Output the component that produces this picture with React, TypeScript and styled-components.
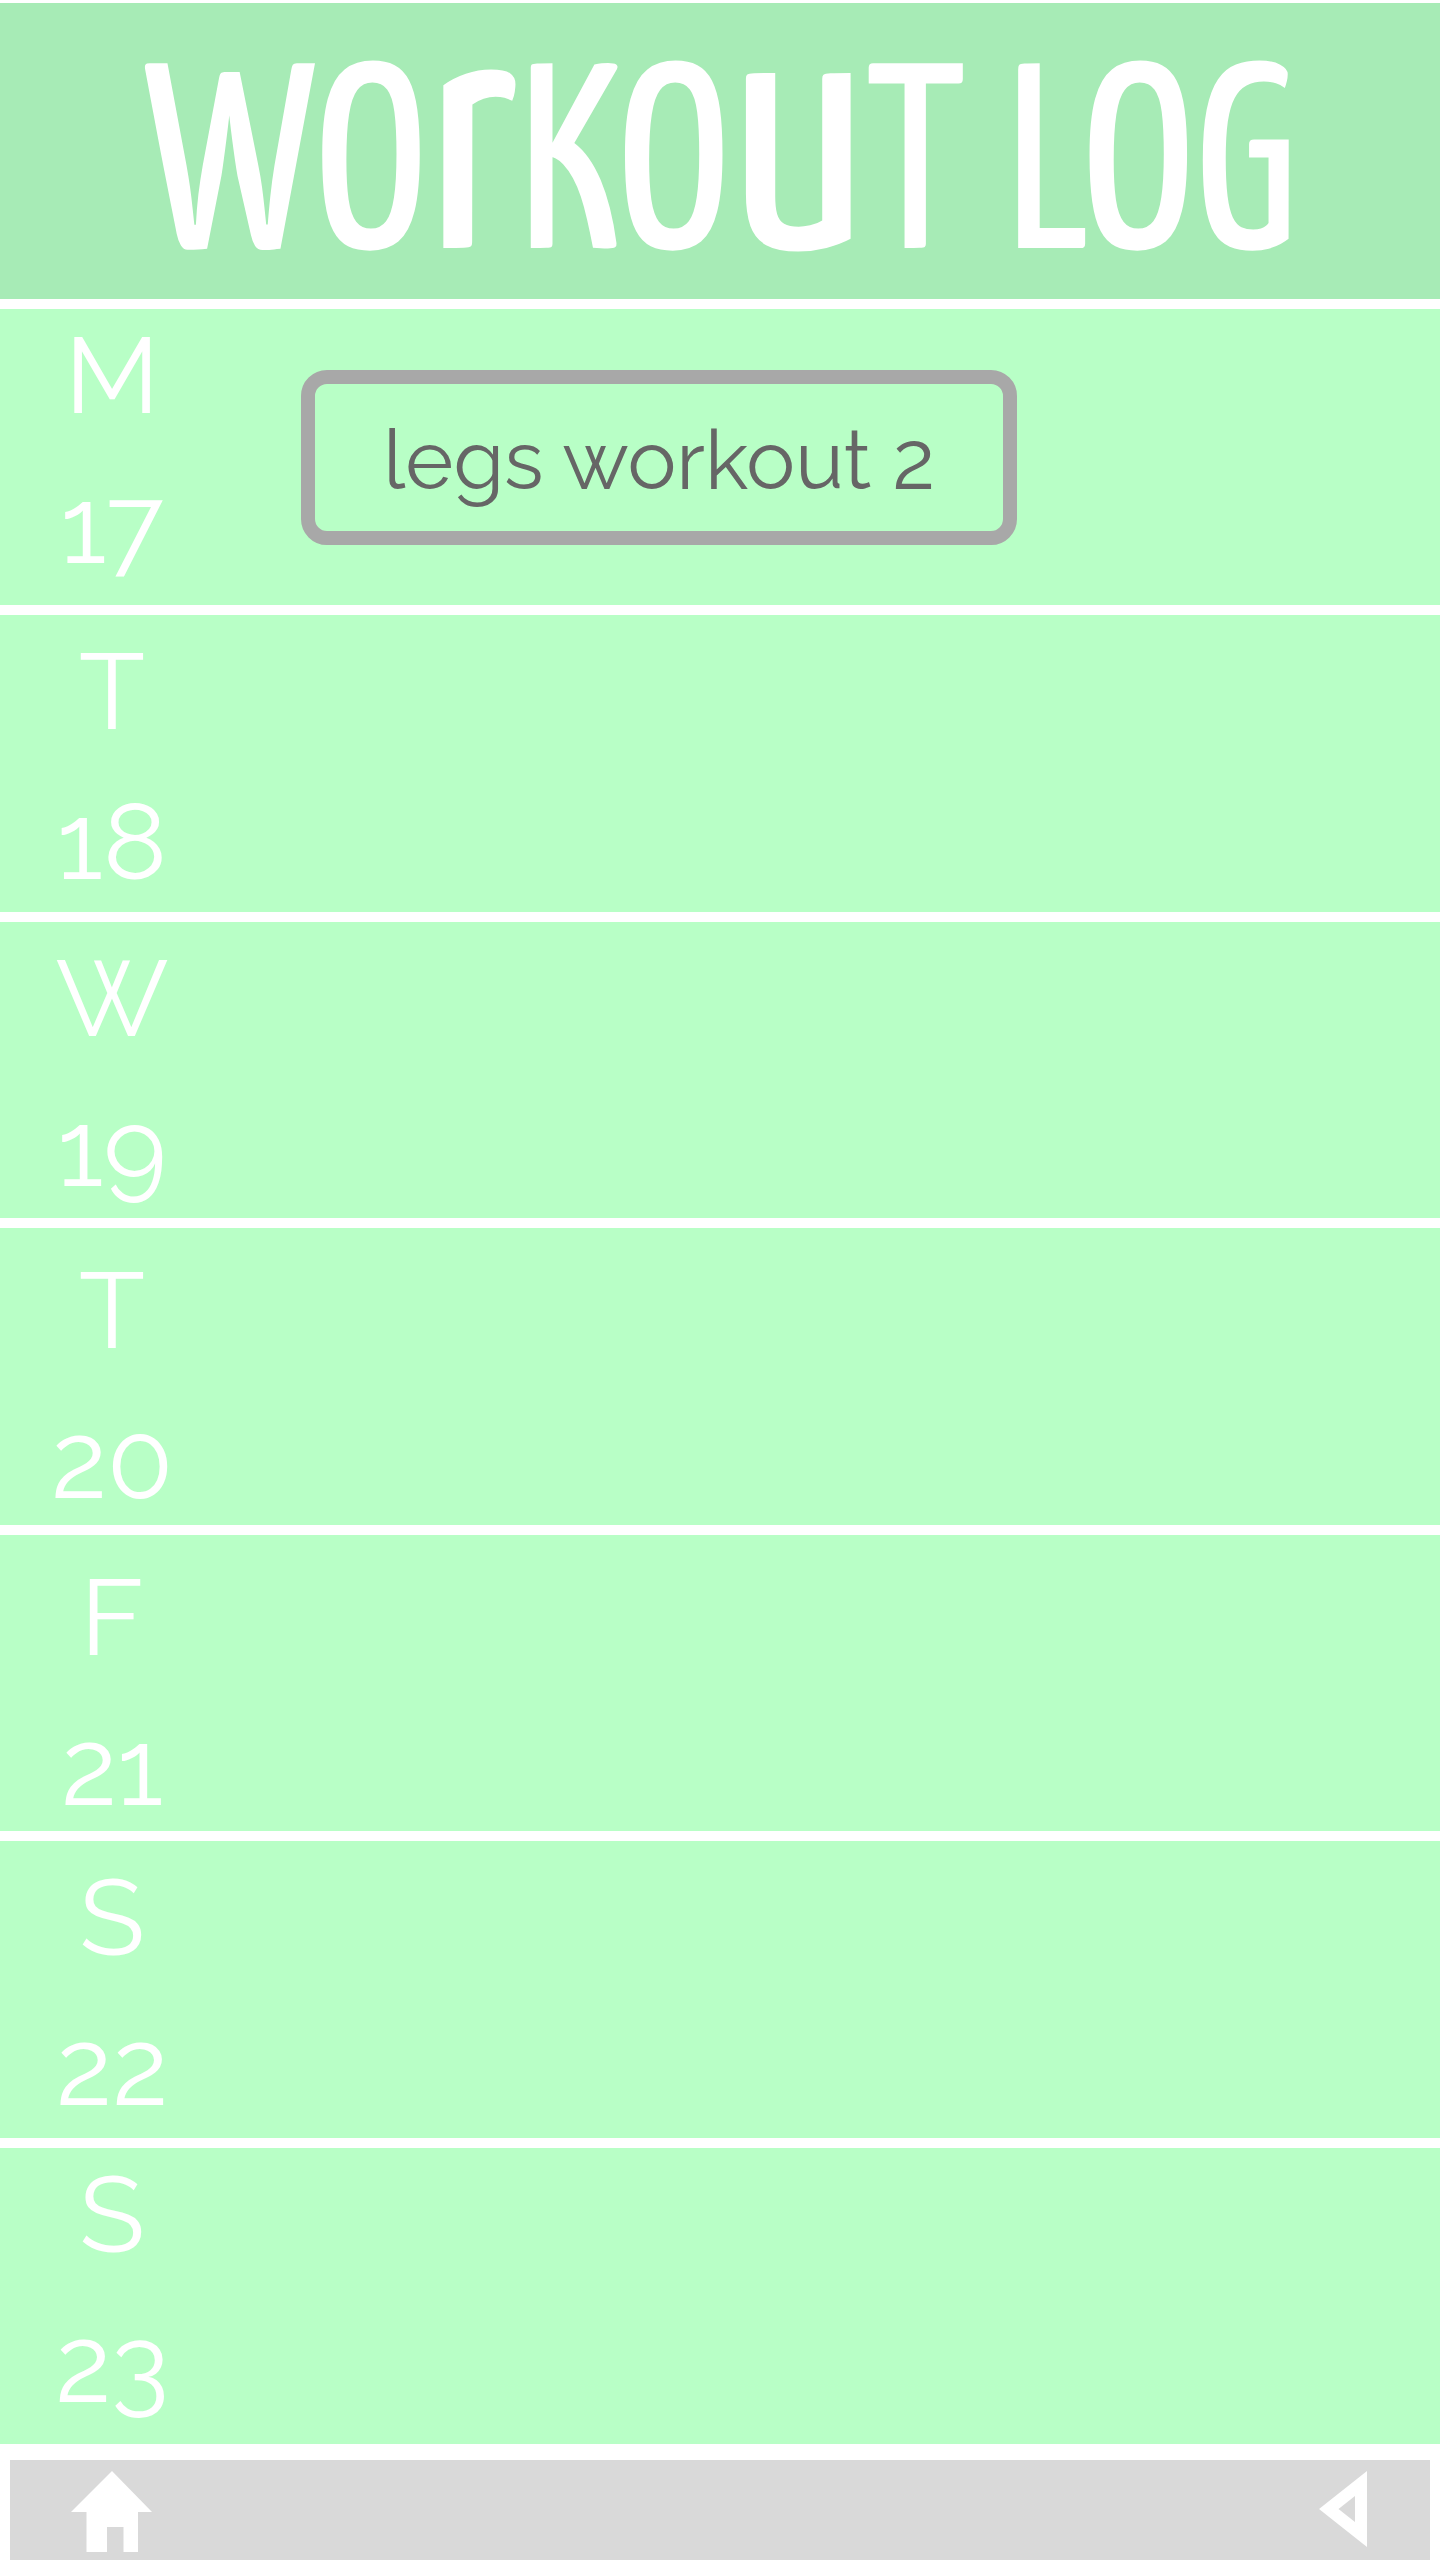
import React from "react";
import styled, { createGlobalStyle } from "styled-components";

const GlobalStyle = createGlobalStyle`
  *, *::before, *::after {
    box-sizing: border-box;
  }
  body {
    margin: 0;
    background: #ffffff;
    font-family: Raleway, Lato, sans-serif;
  }
`;

const Page = styled.div`
  display: flex;
  flex-direction: column;
  min-height: 100vh;
  padding-top: 3px;
`;

const Header = styled.header`
  height: 296px;
  flex: none;
  margin-bottom: 10px;
  padding-top: 32px;
  background: #a7ebb6;
`;

const Title = styled.h1`
  margin: 0;
  color: #ffffff;
  font-family: "Yanone Kaffeesatz", "Roboto Condensed", sans-serif;
  font-size: 264px;
  font-weight: 400;
  line-height: 240px;
  text-align: center;
  white-space: nowrap;
`;

/* Lowercase letters drawn as tall as the capitals around them. */
const TallLetter = styled.span`
  font-size: 350px;
`;

const Week = styled.main`
  display: grid;
  flex: 1;
  grid-auto-rows: 1fr;
  gap: 10px;
`;

type Spacing = "tight" | "normal" | "loose";

const topSpace: Record<Spacing, number> = { tight: 2, normal: 12, loose: 18 };

const DayRow = styled.section`
  display: grid;
  grid-template-columns: 224px 1fr;
  background: #b8ffc6;
`;

const DayLabel = styled.h2<{ $spacing: Spacing }>`
  display: flex;
  flex-direction: column;
  align-items: center;
  gap: 22px;
  margin: 0;
  padding-top: ${(p) => topSpace[p.$spacing]}px;
  color: #ffffff;
  font-size: 108px;
  font-weight: 400;
  line-height: 128px;
`;

const Entries = styled.div`
  padding: 61px 77px 0;
`;

const Entry = styled.button`
  height: 175px;
  padding: 4px 68px 0;
  border: 14px solid #a8a8a8;
  border-radius: 26px;
  background: transparent;
  color: #666666;
  font-family: inherit;
  font-size: 82px;
  line-height: 96px;
  white-space: nowrap;
  cursor: pointer;
`;

const NavBar = styled.nav`
  display: flex;
  align-items: flex-start;
  justify-content: space-between;
  height: 100px;
  flex: none;
  margin: 16px 10px 0;
  padding: 11px 63px 0 61px;
  background: #d9d9d9;
`;

const NavButton = styled.button`
  display: block;
  padding: 0;
  border: 0;
  background: none;
  color: #ffffff;
  cursor: pointer;

  svg {
    display: block;
    fill: currentColor;
  }
`;

interface Day {
  letter: string;
  date: number;
  spacing: Spacing;
  workouts?: string[];
}

const days: Day[] = [
  { letter: "M", date: 17, spacing: "tight", workouts: ["legs workout 2"] },
  { letter: "T", date: 18, spacing: "normal" },
  { letter: "W", date: 19, spacing: "normal" },
  { letter: "T", date: 20, spacing: "loose" },
  { letter: "F", date: 21, spacing: "loose" },
  { letter: "S", date: 22, spacing: "normal" },
  { letter: "S", date: 23, spacing: "tight" },
];

const HomeIcon = () => (
  <svg width="82" height="82" viewBox="0 0 82 82" aria-hidden="true">
    <path d="M41 0 L81 41 H67 V81 H52.500 V56 H36 V81 H15.500 V41 H0 Z" />
  </svg>
);

const BackIcon = () => (
  <svg width="48" height="76" viewBox="0 0 48 76" aria-hidden="true">
    <path fillRule="evenodd" d="M48 0 V76 L0 38 Z M36 25 L19.500 38 L36 51 Z" />
  </svg>
);

export default function App() {
  return (
    <Page>
      <GlobalStyle />
      <Header>
        <Title>
          WO<TallLetter>r</TallLetter>KO<TallLetter>u</TallLetter>T LOG
        </Title>
      </Header>
      <Week>
        {days.map((day) => (
          <DayRow key={day.date}>
            <DayLabel $spacing={day.spacing}>
              <span>{day.letter}</span>
              <span>{day.date}</span>
            </DayLabel>
            {day.workouts && (
              <Entries>
                {day.workouts.map((name) => (
                  <Entry key={name} type="button">{name}</Entry>
                ))}
              </Entries>
            )}
          </DayRow>
        ))}
      </Week>
      <NavBar>
        <NavButton type="button" aria-label="Home">
          <HomeIcon />
        </NavButton>
        <NavButton type="button" aria-label="Back">
          <BackIcon />
        </NavButton>
      </NavBar>
    </Page>
  );
}
